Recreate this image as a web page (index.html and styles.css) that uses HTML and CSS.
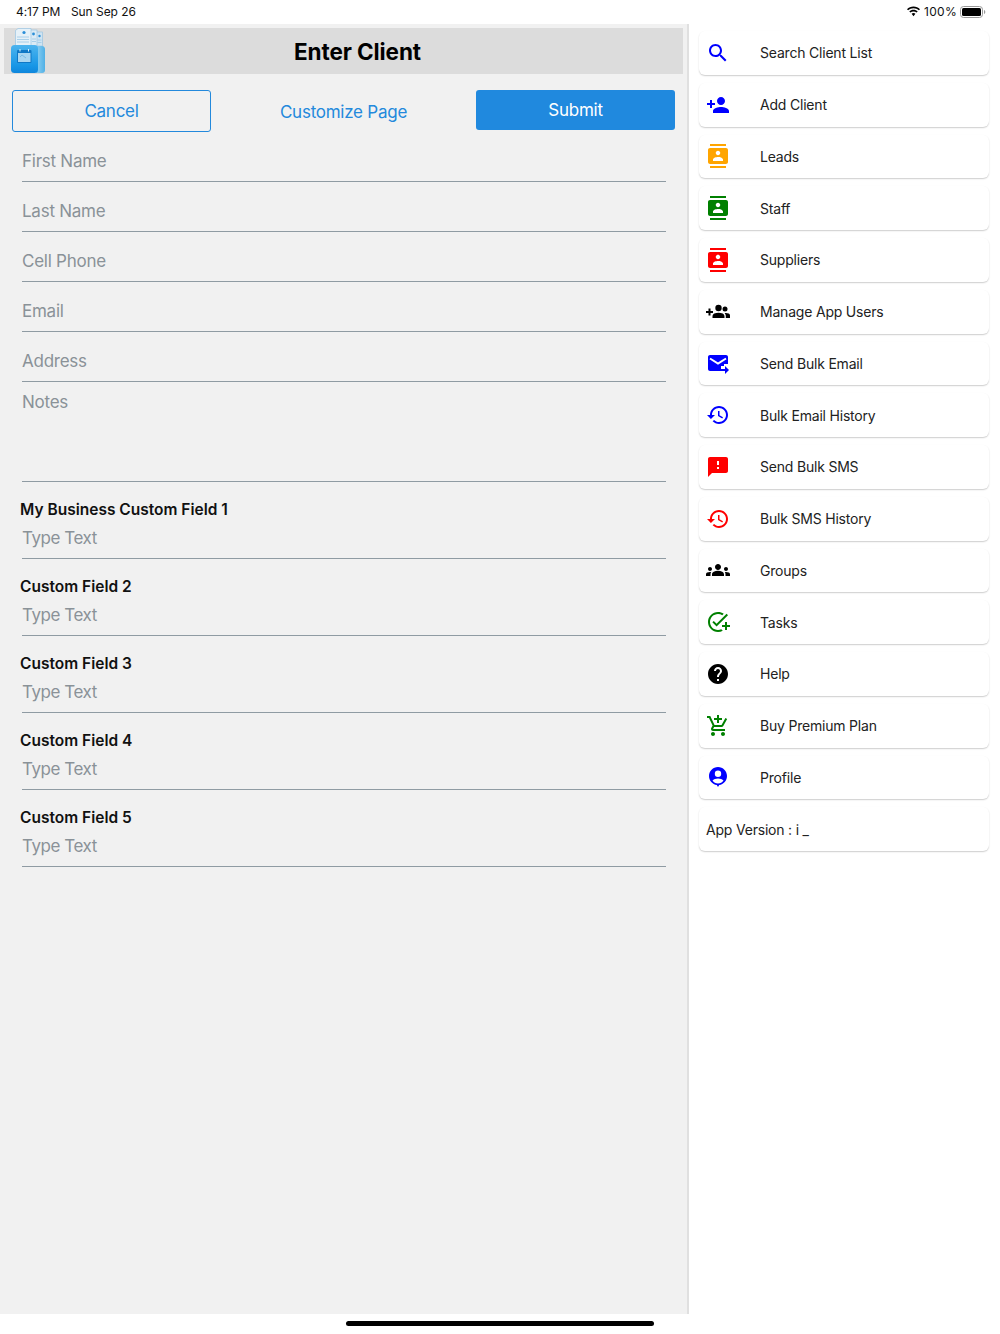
FILE: index.html
```html
<!DOCTYPE html>
<html lang="en">
<head>
<meta charset="utf-8">
<title>Enter Client</title>
<link rel="stylesheet" href="styles.css">
</head>
<body>
<div class="status">
  <div class="status-left"><span>4:17 PM</span><span>Sun Sep 26</span></div>
  <div class="status-right">
    <svg class="wifi" width="15" height="11" viewBox="0 0 15 11"><path fill="#000" d="M7.500 2.200c2.100 0 4 .8 5.400 2.100l1.100-1.100C12.300 1.600 10 .6 7.500 .6S2.700 1.600 1 3.200l1.100 1.100C3.500 3 5.400 2.200 7.500 2.200zM7.500 5.400c1.200 0 2.300.4 3.100 1.200l1.100-1.100C10.600 4.400 9.100 3.800 7.500 3.800S4.400 4.400 3.300 5.500l1.100 1.100c.8-.8 1.900-1.200 3.100-1.200zM5.600 7.700l1.900 2.500 1.900-2.500C8.900 7.200 8.200 7 7.500 7s-1.400.2-1.900.7z"/></svg>
    <span class="pct">100%</span>
    <svg class="battery" width="26" height="12" viewBox="0 0 26 12"><rect x=".5" y=".5" width="22" height="11" rx="3" fill="none" stroke="#999"/><rect x="2" y="2" width="19" height="8" rx="1.500" fill="#000"/><path d="M24 4v4c.8-.3 1.300-1.100 1.300-2S24.800 4.300 24 4z" fill="#999"/></svg>
  </div>
</div>
<div class="app">
  <main class="main">
    <header class="titlebar">
      <svg class="logo" width="36" height="46" viewBox="0 0 36 46">
        <defs>
          <linearGradient id="front" x1="0" y1="0" x2="0" y2="1"><stop offset="0" stop-color="#4db4ee"/><stop offset=".75" stop-color="#1796e6"/><stop offset="1" stop-color="#0f86dc"/></linearGradient>
          <linearGradient id="sidepart" x1="0" y1="0" x2="1" y2="0"><stop offset="0" stop-color="#8fd0f2"/><stop offset="1" stop-color="#4fb0e6"/></linearGradient>
        </defs>
        <rect x="26" y="4" width="6.500" height="14" fill="#cfe4f2" stroke="#8fbfe0" stroke-width=".6"/>
        <rect x="20" y="2" width="7" height="16" fill="#dcebf5" stroke="#8fbfe0" stroke-width=".6"/>
        <path d="M5.500 2.500L8 .5h13v17.500H5.500z" fill="#e6f1f8" stroke="#8fbfe0" stroke-width=".6"/>
        <circle cx="14" cy="4.500" r="1.600" fill="#2b8fd8"/><circle cx="23.500" cy="6" r="1.400" fill="#2b8fd8"/><circle cx="29.500" cy="8" r="1.200" fill="#2b8fd8"/>
        <path d="M7 9h12M7 11.500h12M7 14h12M22 11h4M22 13.500h4M27.500 12h4M27.500 14.500h4" stroke="#a3cce8" stroke-width=".9"/>
        <path d="M26 18h6c2 0 3 1.500 3 3v21c0 2-1 3-3 3h-6z" fill="url(#sidepart)"/>
        <rect x="1" y="17" width="27" height="28" rx="3.500" fill="url(#front)"/>
        <rect x="7" y="22" width="14.500" height="13" rx="1" fill="#0f78c6"/>
        <rect x="8" y="25" width="12.500" height="9" fill="#a9d6f1"/>
        <path d="M10 23.500v-2.500M18.500 23.500v-2.500" stroke="#d7eefb" stroke-width="1"/>
        <path d="M10 29l2-2 4 3" fill="none" stroke="#6fb4e2" stroke-width=".8"/>
      </svg>
      <h1 class="title">Enter Client</h1>
    </header>
    <div class="actions">
      <button class="btn btn-outline">Cancel</button>
      <button class="btn btn-link">Customize Page</button>
      <button class="btn btn-primary">Submit</button>
    </div>
    <div class="form">
      <div class="field">First Name</div>
      <div class="field">Last Name</div>
      <div class="field">Cell Phone</div>
      <div class="field">Email</div>
      <div class="field">Address</div>
      <div class="field field-notes">Notes</div>
      <div class="custom"><div class="custom-label">My Business Custom Field 1</div><div class="custom-input">Type Text</div></div>
      <div class="custom"><div class="custom-label">Custom Field 2</div><div class="custom-input">Type Text</div></div>
      <div class="custom"><div class="custom-label">Custom Field 3</div><div class="custom-input">Type Text</div></div>
      <div class="custom"><div class="custom-label">Custom Field 4</div><div class="custom-input">Type Text</div></div>
      <div class="custom"><div class="custom-label">Custom Field 5</div><div class="custom-input">Type Text</div></div>
    </div>
  </main>
  <nav class="side">
    <a class="row"><svg class="ico c-blue" viewBox="0 0 24 24"><path d="M15.500 14h-.79l-.28-.27C15.410 12.590 16 11.110 16 9.500 16 5.910 13.090 3 9.500 3S3 5.910 3 9.500 5.910 16 9.500 16c1.610 0 3.090-.59 4.230-1.570l.27.28v.79l5 4.990L20.490 19l-4.990-5zm-6 0C7.010 14 5 11.990 5 9.500S7.010 5 9.500 5 14 7.010 14 9.500 11.990 14 9.500 14z"/></svg><span>Search Client List</span></a>
    <a class="row"><svg class="ico c-blue" viewBox="0 0 24 24"><path d="M15 12c2.210 0 4-1.790 4-4s-1.790-4-4-4-4 1.790-4 4 1.790 4 4 4zm-9-2V7H4v3H1v2h3v3h2v-3h3v-2H6zm9 4c-2.670 0-8 1.340-8 4v2h16v-2c0-2.660-5.330-4-8-4z"/></svg><span>Add Client</span></a>
    <a class="row"><svg class="ico c-orange" viewBox="0 0 24 24"><path d="M20 0H4v2h16V0zM4 24h16v-2H4v2zM20 4H4c-1.100 0-2 .9-2 2v12c0 1.100.9 2 2 2h16c1.100 0 2-.9 2-2V6c0-1.100-.9-2-2-2zm-8 2.750c1.240 0 2.250 1.010 2.250 2.250s-1.010 2.250-2.250 2.250S9.750 10.240 9.750 9 10.760 6.750 12 6.750zM17 17H7v-1.500c0-1.670 3.330-2.500 5-2.500s5 .83 5 2.500V17z"/></svg><span>Leads</span></a>
    <a class="row"><svg class="ico c-green" viewBox="0 0 24 24"><path d="M20 0H4v2h16V0zM4 24h16v-2H4v2zM20 4H4c-1.100 0-2 .9-2 2v12c0 1.100.9 2 2 2h16c1.100 0 2-.9 2-2V6c0-1.100-.9-2-2-2zm-8 2.750c1.240 0 2.250 1.010 2.250 2.250s-1.010 2.250-2.250 2.250S9.750 10.240 9.750 9 10.760 6.750 12 6.750zM17 17H7v-1.500c0-1.670 3.330-2.500 5-2.500s5 .83 5 2.500V17z"/></svg><span>Staff</span></a>
    <a class="row"><svg class="ico c-red" viewBox="0 0 24 24"><path d="M20 0H4v2h16V0zM4 24h16v-2H4v2zM20 4H4c-1.100 0-2 .9-2 2v12c0 1.100.9 2 2 2h16c1.100 0 2-.9 2-2V6c0-1.100-.9-2-2-2zm-8 2.750c1.240 0 2.250 1.010 2.250 2.250s-1.010 2.250-2.250 2.250S9.750 10.240 9.750 9 10.760 6.750 12 6.750zM17 17H7v-1.500c0-1.670 3.330-2.500 5-2.500s5 .83 5 2.500V17z"/></svg><span>Suppliers</span></a>
    <a class="row"><svg class="ico c-black" viewBox="0 0 24 24"><path d="M0 11h2.500V8.500h2V11H7v2H4.500v2.500h-2V13H0z"/><circle cx="12.500" cy="8" r="3.200"/><circle cx="19" cy="9" r="2.500"/><path d="M6.500 18v-1.600c0-1.200.7-2.300 1.800-2.800 1.200-.5 2.600-.9 4.200-.9s3.100.4 4.200.9c1.100.5 1.800 1.600 1.800 2.800V18zM19.800 13c1 0 2 .2 2.800.6.800.3 1.400 1 1.400 1.900V18h-4.200v-1.600c0-1.300-.4-2.500-1.200-3.300.3 0 .6-.1 1.200-.1z"/></svg><span>Manage App Users</span></a>
    <a class="row"><svg class="ico c-blue" viewBox="0 0 24 24"><path d="M4 4h16c1.100 0 2 .9 2 2v7h-4v2h-3v5H4c-1.100 0-2-.9-2-2V6c0-1.100.9-2 2-2z"/><path d="M4 7.500l8 5 8-5" fill="none" stroke="#fff" stroke-width="2"/><path d="M19 15l4 4-4 4v-3h-4v-2h4z"/></svg><span>Send Bulk Email</span></a>
    <a class="row"><svg class="ico c-blue" viewBox="0 0 24 24"><path d="M13 3c-4.970 0-9 4.030-9 9H1l3.890 3.890.07.14L9 12H6c0-3.870 3.130-7 7-7s7 3.130 7 7-3.130 7-7 7c-1.930 0-3.680-.79-4.940-2.060l-1.420 1.420C8.270 19.990 10.510 21 13 21c4.970 0 9-4.030 9-9s-4.030-9-9-9zm-1 5v5l4.280 2.540.72-1.210-3.500-2.080V8H12z"/></svg><span>Bulk Email History</span></a>
    <a class="row"><svg class="ico c-red" viewBox="0 0 24 24"><path d="M20 2H4c-1.100 0-1.990.9-1.990 2L2 22l4-4h14c1.100 0 2-.9 2-2V4c0-1.100-.9-2-2-2zm-7 12h-2v-2h2v2zm0-4h-2V6h2v4z"/></svg><span>Send Bulk SMS</span></a>
    <a class="row"><svg class="ico c-red" viewBox="0 0 24 24"><path d="M13 3c-4.970 0-9 4.030-9 9H1l3.890 3.890.07.14L9 12H6c0-3.870 3.130-7 7-7s7 3.130 7 7-3.130 7-7 7c-1.930 0-3.680-.79-4.940-2.060l-1.420 1.420C8.270 19.990 10.510 21 13 21c4.970 0 9-4.030 9-9s-4.030-9-9-9zm-1 5v5l4.280 2.540.72-1.210-3.500-2.080V8H12z"/></svg><span>Bulk SMS History</span></a>
    <a class="row"><svg class="ico c-black" viewBox="0 0 24 24"><path d="M12 12.750c1.630 0 3.070.39 4.240.9 1.080.48 1.760 1.560 1.760 2.730V18H6v-1.610c0-1.180.68-2.260 1.760-2.730 1.170-.52 2.610-.91 4.240-.91zM4 13c1.100 0 2-.9 2-2s-.9-2-2-2-2 .9-2 2 .9 2 2 2zm1.130 1.100c-.37-.06-.74-.1-1.130-.1-.99 0-1.930.21-2.780.58C.48 14.900 0 15.620 0 16.430V18h4.500v-1.610c0-.83.23-1.610.63-2.290zM20 13c1.100 0 2-.9 2-2s-.9-2-2-2-2 .9-2 2 .9 2 2 2zm4 3.430c0-.81-.48-1.530-1.220-1.850-.85-.37-1.790-.58-2.780-.58-.39 0-.76.04-1.130.1.4.68.63 1.460.63 2.290V18H24v-1.570zM12 6c1.660 0 3 1.340 3 3s-1.340 3-3 3-3-1.340-3-3 1.340-3 3-3z"/></svg><span>Groups</span></a>
    <a class="row"><svg class="ico c-green" viewBox="0 0 24 24"><path d="M22 5.180L10.590 16.600l-4.240-4.240 1.410-1.410 2.830 2.830 10-10L22 5.180zM12 20c-4.410 0-8-3.590-8-8s3.590-8 8-8c1.570 0 3.040.46 4.280 1.250l1.450-1.450C16.100 2.670 14.130 2 12 2 6.480 2 2 6.480 2 12s4.480 10 10 10c1.730 0 3.360-.44 4.780-1.220l-1.500-1.500c-1 .46-2.110.72-3.280.72zm7-5h-3v2h3v3h2v-3h3v-2h-3v-3h-2v3z"/></svg><span>Tasks</span></a>
    <a class="row"><svg class="ico c-black" viewBox="0 0 24 24"><path d="M12 2C6.480 2 2 6.480 2 12s4.480 10 10 10 10-4.480 10-10S17.520 2 12 2zm1 17h-2v-2h2v2zm2.070-7.750l-.9.92C13.450 12.900 13 13.500 13 15h-2v-.5c0-1.100.45-2.100 1.170-2.830l1.240-1.260c.37-.36.59-.86.59-1.410 0-1.100-.9-2-2-2s-2 .9-2 2H8c0-2.210 1.790-4 4-4s4 1.790 4 4c0 .88-.36 1.680-.93 2.250z"/></svg><span>Help</span></a>
    <a class="row"><svg class="ico c-green" viewBox="0 0 24 24"><path d="M11 9h2V6h3V4h-3V1h-2v3H8v2h3v3zm-4 9c-1.100 0-1.990.9-1.990 2S5.900 22 7 22s2-.9 2-2-.9-2-2-2zm10 0c-1.100 0-1.990.9-1.990 2s.89 2 1.990 2 2-.9 2-2-.9-2-2-2zm-9.830-3.250l.03-.12.9-1.630h7.450c.75 0 1.410-.41 1.750-1.030l3.860-7.010L19.420 4h-.01l-1.100 2-2.760 5H8.530l-.13-.27L6.160 6l-.95-2-.94-2H1v2h2l3.600 7.590-1.350 2.450c-.16.28-.25.61-.25.96 0 1.100.9 2 2 2h12v-2H7.420c-.13 0-.25-.11-.25-.25z"/></svg><span>Buy Premium Plan</span></a>
    <a class="row"><svg class="ico c-blue" viewBox="0 0 24 24"><path fill-rule="evenodd" d="M12 2c-5 0-9 4-9 9 0 4.600 3.400 8.400 7.800 9l1.200 2 1.200-2c4.400-.6 7.800-4.400 7.800-9 0-5-4-9-9-9zm0 3.500a3.200 3.200 0 1 1 0 6.400 3.200 3.200 0 0 1 0-6.400zM12 18.500c-2.300 0-4.300-1.200-5.500-3 .9-1.300 3.500-2.100 5.500-2.100s4.600.8 5.500 2.100c-1.200 1.800-3.200 3-5.500 3z"/></svg><span>Profile</span></a>
    <div class="row row-version"><span>App Version : i _</span></div>
  </nav>
</div>
<div class="home"><div class="home-bar"></div></div>
</body>
</html>
```
FILE: styles.css
```css
* { box-sizing: border-box; }
html, body { margin: 0; padding: 0; }
body { width: 1000px; height: 1334px; overflow: hidden; background: #fff; font-family: Inter, "Liberation Sans", sans-serif; color: #111; display: flex; flex-direction: column; }
.status { height: 24px; display: flex; justify-content: space-between; align-items: center; padding: 0 14px 1px 16px; font-size: 12px; flex: none; }
.status-left { display: flex; gap: 10.500px; letter-spacing: -.05px; }
.status-right { display: flex; align-items: center; gap: 3px; }
.pct { letter-spacing: .3px; }
.app { flex: 1; display: flex; min-height: 0; }
.main { width: 689px; background: #f1f1f1; border-right: 2px solid #e0e0e0; padding-top: 4px; flex: none; }
.titlebar { position: relative; height: 46px; margin: 0 4px; background: #dcdcdc; display: flex; align-items: center; justify-content: center; padding-left: 28px; }
.logo { position: absolute; left: 6px; top: 0; }
.title { margin: 0; font-size: 22.500px; font-weight: 700; color: #000; letter-spacing: -.1px; }
.actions { display: flex; justify-content: space-between; align-items: flex-start; padding: 16px 12px 0; height: 58px; }
.btn { width: 199px; font: inherit; font-size: 17px; letter-spacing: -.25px; border-radius: 3px; color: #2389dc; background: transparent; border: 0; padding: 0; }
.btn-outline { height: 42px; border: 1px solid #2389dc; }
.btn-link { height: 44px; }
.btn-primary { height: 40px; background: #2089de; color: #fff; }
.form { padding: 0 21px 0 20px; }
.field { height: 50px; margin-left: 2px; border-bottom: 1px solid #8f9ba3; display: flex; align-items: center; font-size: 17px; letter-spacing: -.25px; color: #8a9298; padding-top: 9px; }
.field-notes { align-items: flex-start; padding-top: 10px; height: 100px; }
.custom { height: 77px; padding-top: 18px; }
.custom-label { font-size: 15.500px; font-weight: 600; color: #111; line-height: 20px; }
.custom-input { height: 39px; margin-left: 2px; padding-top: 7px; border-bottom: 1px solid #8f9ba3; font-size: 17px; letter-spacing: -.45px; line-height: 22px; color: #8a9298; }
.side { flex: 1; padding: 7px 11px 0 10px; display: flex; flex-direction: column; gap: 8px; }
.row { height: 43.750px; flex: none; display: flex; align-items: center; padding-left: 7px; background: #fff; border-radius: 6px; box-shadow: 0 1px 1.500px rgba(0,0,0,.2); font-size: 14px; letter-spacing: -.2px; color: #222; }
.row span { margin-left: 30px; }
.row-version span { margin-left: 0; }
.ico { width: 24px; height: 24px; flex: none; }
.c-blue { fill: #0000ff; }
.c-orange { fill: #ffa500; }
.c-green { fill: #008000; }
.c-red { fill: #ff0000; }
.c-black { fill: #000; }
.home { height: 20px; flex: none; display: flex; justify-content: center; padding-top: 7px; }
.home-bar { width: 308px; height: 5px; background: #000; border-radius: 3px; }
```
